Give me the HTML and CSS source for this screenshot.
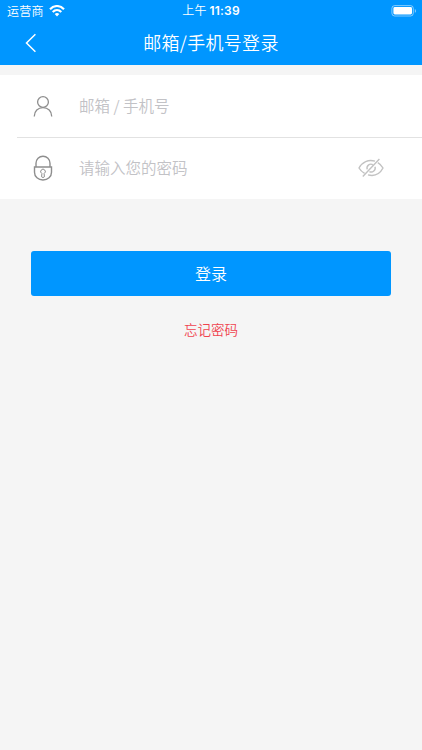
FILE: index.html
```
<!DOCTYPE html>
<html lang="zh-CN">
<head>
<meta charset="utf-8">
<title>邮箱/手机号登录</title>
<link rel="stylesheet" href="styles.css">
</head>
<body>
<header class="header">
  <div class="status">
    <div class="carrier"><span>运营商</span>
      <svg class="wifi" width="16" height="12" viewBox="0 0 16 12" fill="none" stroke="#fff" stroke-width="2.1"><path d="M1 4.3C5-.1 11-.1 15 4.3M3.7 7C6.2 4.5 9.8 4.5 12.3 7"/><path d="M5.7 9.1Q8 7.1 10.3 9.1L8 11.4Z" fill="#fff" stroke="none"/></svg>
    </div>
    <div class="time">上午 <span class="digits">11:39</span></div>
    <div class="power">
      <svg width="26" height="12" viewBox="0 0 26 12"><rect x=".9" y=".6" width="21.4" height="10.4" rx="2.8" fill="none" stroke="#fff" stroke-opacity=".5"/><rect x="2.4" y="2.1" width="18.6" height="7.4" rx="1.4" fill="#fff"/><path d="M23.8 4v3.8q1.3-.6 1.3-1.9T23.8 4Z" fill="#fff" fill-opacity=".5"/></svg>
    </div>
  </div>
  <div class="nav">
    <svg class="back" width="12" height="20" viewBox="0 0 12 20" fill="none" stroke="#fff" stroke-width="1.5"><path d="M10.4 1.2 1.5 10l8.9 8.8"/></svg>
    <h1 class="title">邮箱/手机号登录</h1>
  </div>
</header>
<main>
  <div class="fields">
    <label class="field">
      <svg class="icon" width="20" height="26" viewBox="0 0 20 26" fill="none" stroke="#8e8e8e" stroke-width="1.3"><circle cx="10" cy="9" r="5.4"/><path d="M1.300 23.600v-.4C1.300 18.200 5 14.600 10 14.600s8.700 3.600 8.700 8.600v.4"/></svg>
      <input class="input" type="text" placeholder="邮箱 / 手机号">
    </label>
    <label class="field field-password">
      <svg class="icon" width="20" height="26" viewBox="0 0 20 26" fill="none" stroke="#8e8e8e" stroke-width="1.4"><path d="M3 12V8.300a7 7 0 0 1 14 0V12"/><path d="M1.500 12h17v5.200c0 4.600-3.700 7.800-8.500 7.800s-8.500-3.200-8.500-7.800Z"/><path d="M8.900 18.500a2.300 2.300 0 1 1 2.200 0l.3 3.300q-1.400 1.600-2.800 0Z" stroke-width="1"/></svg>
      <input class="input" type="text" placeholder="请输入您的密码">
      <svg class="eye" width="26" height="24" viewBox="0 0 26 24" fill="none" stroke="#c2c2c2" stroke-width="1.4"><path d="M17 5.2C10.500 3 4 6 1 12q2 3.400 5.600 5.400M10 18.900c6.500 1.600 12-1.200 15-6.900q-1.800-3.400-5.200-5.400"/><path d="M14.800 8.600a4 4 0 0 0-5.600 4.800M11.400 15.600a4 4 0 0 0 5.600-4.800M21.400 3 4.800 20.600"/></svg>
    </label>
  </div>
  <button class="submit" type="button">登录</button>
  <a class="forgot">忘记密码</a>
</main>
</body>
</html>
```
FILE: styles.css
```
* {
  box-sizing: border-box;
}

body {
  margin: 0;
  min-height: 750px;
  background: #f5f5f5;
  font-family: "Noto Sans CJK SC", sans-serif;
  font-weight: 350;
}

svg {
  display: block;
  flex: none;
}

.header {
  height: 65px;
  background: #0096ff;
  color: #fff;
}

.status {
  display: grid;
  grid-template-columns: 1fr auto 1fr;
  align-items: center;
  height: 21px;
  padding: 0 5px 0 7px;
  font-size: 12px;
  line-height: 20px;
}

.carrier {
  display: flex;
  align-items: center;
  gap: 5px;
  letter-spacing: 0.3px;
}

.time {
  margin-left: -2px;
  letter-spacing: 0.2px;
}

.digits {
  font-family: Inter, sans-serif;
  font-weight: 600;
}

.power {
  display: flex;
  justify-content: flex-end;
}

.nav {
  display: grid;
  grid-template-columns: 37px 1fr 37px;
  align-items: center;
  height: 43px;
}

.back {
  justify-self: end;
}

.title {
  margin: 0;
  padding-bottom: 1px;
  font-size: 18px;
  font-weight: 350;
  line-height: 41px;
  letter-spacing: 0.3px;
  text-align: center;
}

.fields {
  margin-top: 10px;
  padding-left: 17px;
  background: #fff;
}

.field {
  display: flex;
  align-items: center;
  height: 62px;
  padding: 0 38px 0 16px;
}

.field-password {
  border-top: 1px solid #e2e2e2;
  padding-bottom: 2px;
}

.input {
  flex: 1;
  min-width: 0;
  margin-left: 26px;
  padding: 0 0 2px;
  border: 0;
  outline: 0;
  background: none;
  color: #333;
  font: 350 15.5px "Noto Sans CJK SC", sans-serif;
}

.input::placeholder {
  color: #c2c2c6;
}

.submit {
  display: block;
  width: 360px;
  height: 45px;
  margin: 52px 0 0 31px;
  padding: 0 0 2px;
  border: 0;
  border-radius: 3px;
  background: #0096ff;
  color: #fff;
  font: 350 16px "Noto Sans CJK SC", sans-serif;
}

.forgot {
  display: block;
  margin-top: 23px;
  color: #f0434f;
  font-size: 13.5px;
  line-height: 20px;
  text-align: center;
}
```
